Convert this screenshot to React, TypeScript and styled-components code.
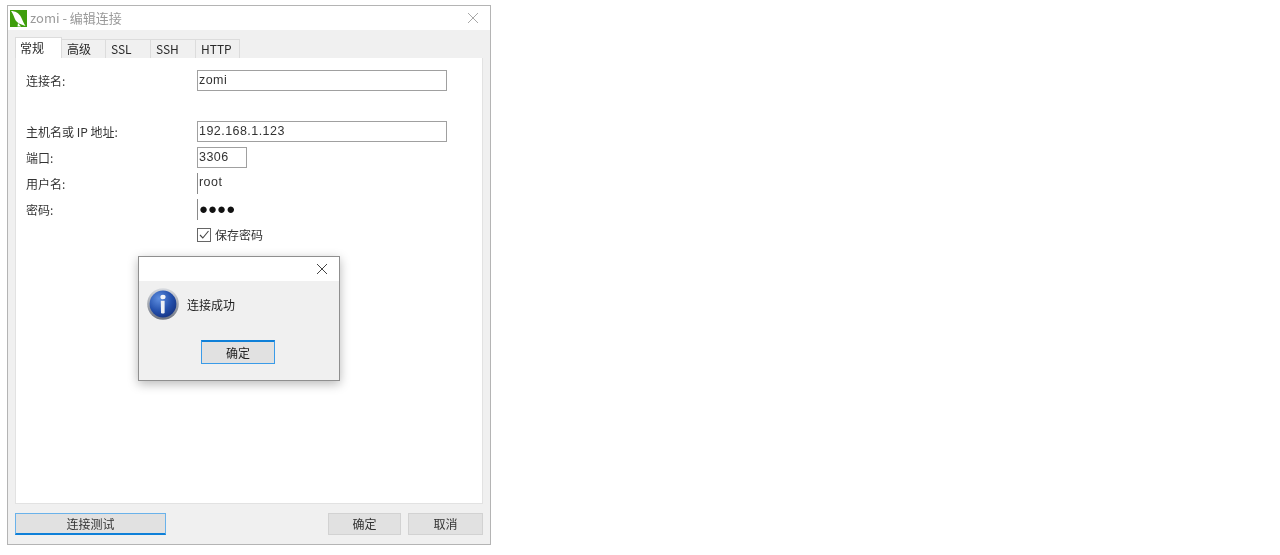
import styled, { createGlobalStyle } from "styled-components";

const GlobalStyle = createGlobalStyle`
  html, body {
    margin: 0;
    padding: 0;
    background: #fff;
  }
  body {
    font-family: "Noto Sans CJK SC", "Liberation Sans", sans-serif;
    font-size: 12px;
    color: #222;
  }
`;

const Page = styled.div`
  width: 1280px;
  height: 555px;
  padding: 5px 0 0 7px;
  box-sizing: border-box;
  overflow: hidden;
`;

const Window = styled.div`
  position: relative;
  width: 484px;
  height: 540px;
  box-sizing: border-box;
  border: 1px solid #b4b4b4;
  background: #f0f0f0;
  display: flex;
  flex-direction: column;
  filter: blur(0.5px);
`;

const TitleBar = styled.div`
  height: 24px;
  flex: none;
  background: #fff;
  display: flex;
  align-items: center;
  padding: 0 11px 0 2px;
`;

const TitleText = styled.span`
  margin-left: 3px;
  margin-top: -2px;
  font-size: 13px;
  color: #9a9a9a;
  flex: 1;
`;

const Tabs = styled.div`
  display: flex;
  align-items: flex-end;
  height: 28px;
  margin: 0 0 0 7px;
  flex: none;
`;

const Tab = styled.div<{ $active?: boolean; $width: number }>`
  width: ${(p) => p.$width}px;
  height: ${(p) => (p.$active ? 21 : 19)}px;
  box-sizing: border-box;
  background: ${(p) => (p.$active ? "#fff" : "#f0f0f0")};
  border: 1px solid #dcdcdc;
  border-bottom: none;
  margin-left: ${(p) => (p.$active ? 0 : -1)}px;
  padding: 0 0 2px ${(p) => (p.$active ? 4 : 5)}px;
  display: flex;
  align-items: center;
  font-size: 12px;
  color: #2a2a2a;
`;

const Panel = styled.div`
  width: 468px;
  height: 446px;
  margin-left: 7px;
  flex: none;
  box-sizing: border-box;
  background: #fff;
  border: 1px solid #e2e2e2;
  border-top: none;
  padding: 12px 0 0 10px;
  display: flex;
  flex-direction: column;
`;

const Row = styled.div<{ $gap?: number }>`
  display: flex;
  align-items: center;
  height: 21px;
  margin-bottom: ${(p) => p.$gap ?? 5}px;
`;

const Label = styled.div`
  width: 171px;
  flex: none;
  font-size: 12px;
  color: #333;
`;

const Field = styled.div<{ $width: number; $open?: boolean }>`
  width: ${(p) => p.$width}px;
  height: 21px;
  box-sizing: border-box;
  border: 1px solid #a0a0a0;
  ${(p) => (p.$open ? "border-width: 0 0 0 1px; border-color: #8a8a8a;" : "")}
  padding: 0 1px;
  font-size: 12.5px;
  line-height: 19px;
  color: #333;
  font-family: "Liberation Sans", sans-serif;
  letter-spacing: 0.45px;
  white-space: nowrap;
`;

const Dots = styled.span`
  font-size: 15px;
  color: #111;
  letter-spacing: 0;
`;

const CheckRow = styled.div`
  display: flex;
  align-items: center;
  gap: 4px;
  margin: 2px 0 0 171px;
  height: 15px;
`;

const CheckBox = styled.div`
  width: 14px;
  height: 14px;
  box-sizing: border-box;
  border: 1px solid #666;
  display: flex;
  align-items: center;
  justify-content: center;
`;

const CheckLabel = styled.span`
  font-size: 12px;
  color: #333;
  margin-top: -1px;
`;

const Footer = styled.div`
  display: flex;
  margin: 9px 0 0 7px;
  width: 468px;
`;

const Button = styled.div<{ $width: number; $primary?: boolean }>`
  width: ${(p) => p.$width}px;
  height: 22px;
  box-sizing: border-box;
  background: #e1e1e1;
  border: 1px solid ${(p) => (p.$primary ? "#6ab2ea" : "#d2d2d2")};
  ${(p) => (p.$primary ? "border-bottom: 2px solid #0f80d8;" : "")}
  padding-bottom: ${(p) => (p.$primary ? 0 : 2)}px;
  display: flex;
  align-items: center;
  justify-content: center;
  font-size: 12px;
  color: #333;
`;

const Spacer = styled.div`
  flex: 1;
`;

const FooterGap = styled.div`
  width: 7px;
`;

const Dialog = styled.div`
  position: absolute;
  left: 130px;
  top: 250px;
  width: 202px;
  height: 125px;
  box-sizing: border-box;
  border: 1px solid #8f8f8f;
  background: #f0f0f0;
  box-shadow: 0 3px 10px rgba(0, 0, 0, 0.28);
  display: flex;
  flex-direction: column;
`;

const DialogTitle = styled.div`
  height: 24px;
  flex: none;
  background: #fff;
  display: flex;
  justify-content: flex-end;
  align-items: center;
  padding-right: 11px;
`;

const DialogBody = styled.div`
  display: flex;
  align-items: center;
  gap: 8px;
  margin: 7px 0 0 8px;
`;

const DialogText = styled.span`
  font-size: 12px;
  color: #222;
`;

const DialogFooter = styled.div`
  display: flex;
  justify-content: center;
  margin: 20px 0 0 -2px;
`;

const DialogButton = styled.div`
  width: 74px;
  height: 24px;
  box-sizing: border-box;
  background: #e1e1e1;
  border: 1px solid #3a9be8;
  border-top: 2px solid #0f80d8;
  display: flex;
  align-items: center;
  justify-content: center;
  font-size: 12px;
  color: #222;
`;

const CloseIcon = ({ color }: { color: string }) => (
  <svg width="12" height="12" viewBox="0 0 12 12" fill="none">
    <path d="M1 1 L11 11 M11 1 L1 11" stroke={color} strokeWidth="1" />
  </svg>
);

const Logo = () => (
  <svg width="17" height="17" viewBox="0 0 17 17">
    <rect width="17" height="17" fill="#3f9e0c" />
    <path d="M1 1 C5 1 9 3 11 7 C12.5 10 13.5 13 15.5 16 L11.5 14.5 C8 13.5 5.5 11 4.5 8 C3.5 5 2.5 3 1 1 Z" fill="#fff" />
    <path d="M8 13 L11 16.5 L7.5 16.5 Z" fill="#fff" />
  </svg>
);

const InfoIcon = () => (
  <svg width="32" height="32" viewBox="0 0 32 32">
    <defs>
      <radialGradient id="infoBlue" cx="35%" cy="30%" r="85%">
        <stop offset="0%" stopColor="#5f8fe0" />
        <stop offset="55%" stopColor="#2450ac" />
        <stop offset="100%" stopColor="#122c78" />
      </radialGradient>
      <linearGradient id="infoRing" x1="0" y1="0" x2="0" y2="1">
        <stop offset="0%" stopColor="#d8dbe0" />
        <stop offset="100%" stopColor="#6e7480" />
      </linearGradient>
    </defs>
    <circle cx="16" cy="16" r="15.8" fill="url(#infoRing)" />
    <circle cx="16" cy="16" r="13.4" fill="url(#infoBlue)" />
    <ellipse cx="16" cy="9" rx="2.6" ry="2.3" fill="#f4f6fa" />
    <path d="M13.8 12.8 H17.6 V25 Q15.8 26 14 25 Z" fill="#eef1f6" />
  </svg>
);

const tabs = [
  { label: "常规", width: 47, active: true },
  { label: "高级", width: 45 },
  { label: "SSL", width: 46 },
  { label: "SSH", width: 46 },
  { label: "HTTP", width: 45 },
];

export default function App() {
  return (
    <Page>
      <GlobalStyle />
      <Window>
        <TitleBar>
          <Logo />
          <TitleText>zomi - 编辑连接</TitleText>
          <CloseIcon color="#a8a8a8" />
        </TitleBar>
        <Tabs>
          {tabs.map((t) => (
            <Tab key={t.label} $active={t.active} $width={t.width}>
              {t.label}
            </Tab>
          ))}
        </Tabs>
        <Panel>
          <Row $gap={30}>
            <Label>连接名:</Label>
            <Field $width={250}>zomi</Field>
          </Row>
          <Row>
            <Label>主机名或 IP 地址:</Label>
            <Field $width={250}>192.168.1.123</Field>
          </Row>
          <Row>
            <Label>端口:</Label>
            <Field $width={50}>3306</Field>
          </Row>
          <Row>
            <Label>用户名:</Label>
            <Field $width={250} $open>root</Field>
          </Row>
          <Row>
            <Label>密码:</Label>
            <Field $width={250} $open><Dots>●●●●</Dots></Field>
          </Row>
          <CheckRow>
            <CheckBox>
              <svg width="12" height="12" viewBox="0 0 12 12" fill="none">
                <path d="M2 6 L4.8 9 L10.5 2" stroke="#444" strokeWidth="1.1" />
              </svg>
            </CheckBox>
            <CheckLabel>保存密码</CheckLabel>
          </CheckRow>
        </Panel>
        <Footer>
          <Button $width={151} $primary>连接测试</Button>
          <Spacer />
          <Button $width={73}>确定</Button>
          <FooterGap />
          <Button $width={75}>取消</Button>
        </Footer>
        <Dialog>
          <DialogTitle>
            <CloseIcon color="#444" />
          </DialogTitle>
          <DialogBody>
            <InfoIcon />
            <DialogText>连接成功</DialogText>
          </DialogBody>
          <DialogFooter>
            <DialogButton>确定</DialogButton>
          </DialogFooter>
        </Dialog>
      </Window>
    </Page>
  );
}
